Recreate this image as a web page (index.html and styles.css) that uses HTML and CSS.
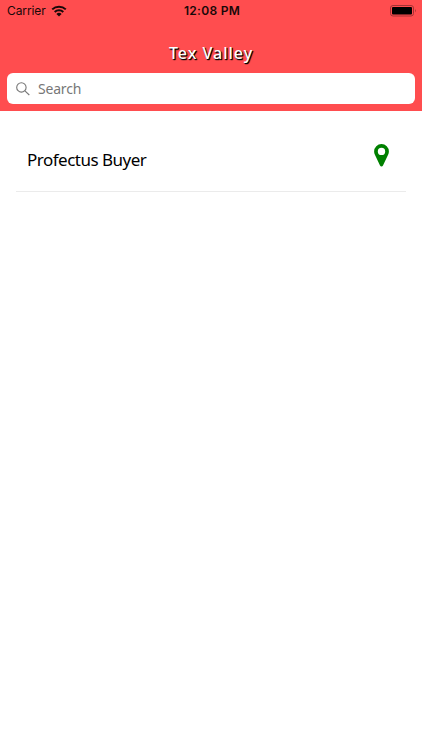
FILE: index.html
```html
<!DOCTYPE html>
<html lang="en">
<head>
  <meta charset="utf-8">
  <title>Tex Valley</title>
  <link rel="stylesheet" href="styles.css">
</head>
<body>
  <header class="header">
    <div class="status-bar">
      <div class="carrier">
        <span class="carrier-name">Carrier</span>
        <svg class="wifi" width="16" height="12" viewBox="0 0 16 12">
          <path d="M1.2 4.4a9.8 9.8 0 0 1 13.6 0M3.7 7a6.2 6.2 0 0 1 8.6 0" fill="none" stroke="#180808" stroke-width="2"/>
          <path d="M5.4 8.9a3.8 3.8 0 0 1 5.2 0L8 11.5z" fill="#180808"/>
        </svg>
      </div>
      <span class="time">12:08 PM</span>
      <svg class="battery" width="27" height="12" viewBox="0 0 27 12">
        <rect x=".5" y=".5" width="23" height="10.5" rx="2.5" fill="none" stroke="#a33335"/>
        <rect x="2" y="2" width="20" height="7.5" rx="1" fill="#000"/>
        <path d="M25 4q1.5 1.8 0 3.6z" fill="#8f2b2d"/>
      </svg>
    </div>
    <h1 class="title">Tex Valley</h1>
    <label class="search">
      <svg class="search-icon" width="14" height="14" viewBox="0 0 14 14">
        <circle cx="5.4" cy="5.4" r="4.7"/>
        <path d="M8.9 8.9l4.4 4.1"/>
      </svg>
      <input class="search-input" type="text" placeholder="Search">
    </label>
  </header>

  <main class="list">
    <div class="item">
      <span class="item-name">Profectus Buyer</span>
      <svg class="pin" width="15" height="23" viewBox="0 0 15 23">
        <path fill-rule="evenodd" d="M7.5 0A7.4 7.4 0 0 0 .1 7.4c0 1.3.3 2.4.8 3.4L6 21.6c.6 1.2 2.4 1.2 3 0l5.1-10.8c.5-1 .8-2.1.8-3.4A7.4 7.4 0 0 0 7.5 0zM7.500 3.7a3.7 3.7 0 1 1 0 7.4 3.7 3.7 0 0 1 0-7.4z" fill="#008000"/>
      </svg>
    </div>
  </main>
</body>
</html>
```
FILE: styles.css
```css
* {
  box-sizing: border-box;
}

body {
  margin: 0;
  background-color: #fff;
  font-family: "Noto Sans", "Open Sans", sans-serif;
}

.header {
  height: 111px;
  padding: 0 7px;
  background-color: #ff4d4f;
}

.status-bar {
  display: grid;
  grid-template-columns: 1fr auto 1fr;
  align-items: center;
  height: 21px;
  margin-right: -2px;
  font-family: Inter, "Liberation Sans", sans-serif;
  color: #180808;
}

.carrier {
  display: flex;
  align-items: center;
  gap: 5px;
}

.carrier-name {
  font-size: 12px;
  letter-spacing: -0.1px;
}

.time {
  font-size: 12px;
  font-weight: 600;
  letter-spacing: 0.3px;
}

.battery {
  justify-self: end;
}

.title {
  margin: 0;
  height: 52px;
  padding-top: 21px;
  font-size: 16px;
  font-weight: 500;
  line-height: 22px;
  letter-spacing: 1px;
  text-align: center;
  color: #fff;
  text-shadow: 1px 1px 1px #000, 1px 1px 1px #000;
}

.search {
  display: flex;
  align-items: center;
  gap: 8px;
  height: 31px;
  padding: 0 9px;
  border-radius: 6px;
  background-color: #fff;
}

.search-icon {
  fill: none;
  stroke: #777;
  stroke-width: 1.1;
}

.search-input {
  flex: 1;
  padding: 0;
  border: none;
  outline: none;
  font-family: inherit;
  font-size: 14px;
  letter-spacing: -0.2px;
  background: none;
}

.search-input::placeholder {
  color: #777;
}

.list {
  padding: 0 16px;
}

.item {
  display: flex;
  justify-content: space-between;
  height: 81px;
  padding: 33px 17px 0 11px;
  border-bottom: 1px solid #ebebeb;
}

.item-name {
  padding-top: 4px;
  font-size: 17px;
  line-height: 24px;
  letter-spacing: -0.5px;
  color: #000;
}
```
